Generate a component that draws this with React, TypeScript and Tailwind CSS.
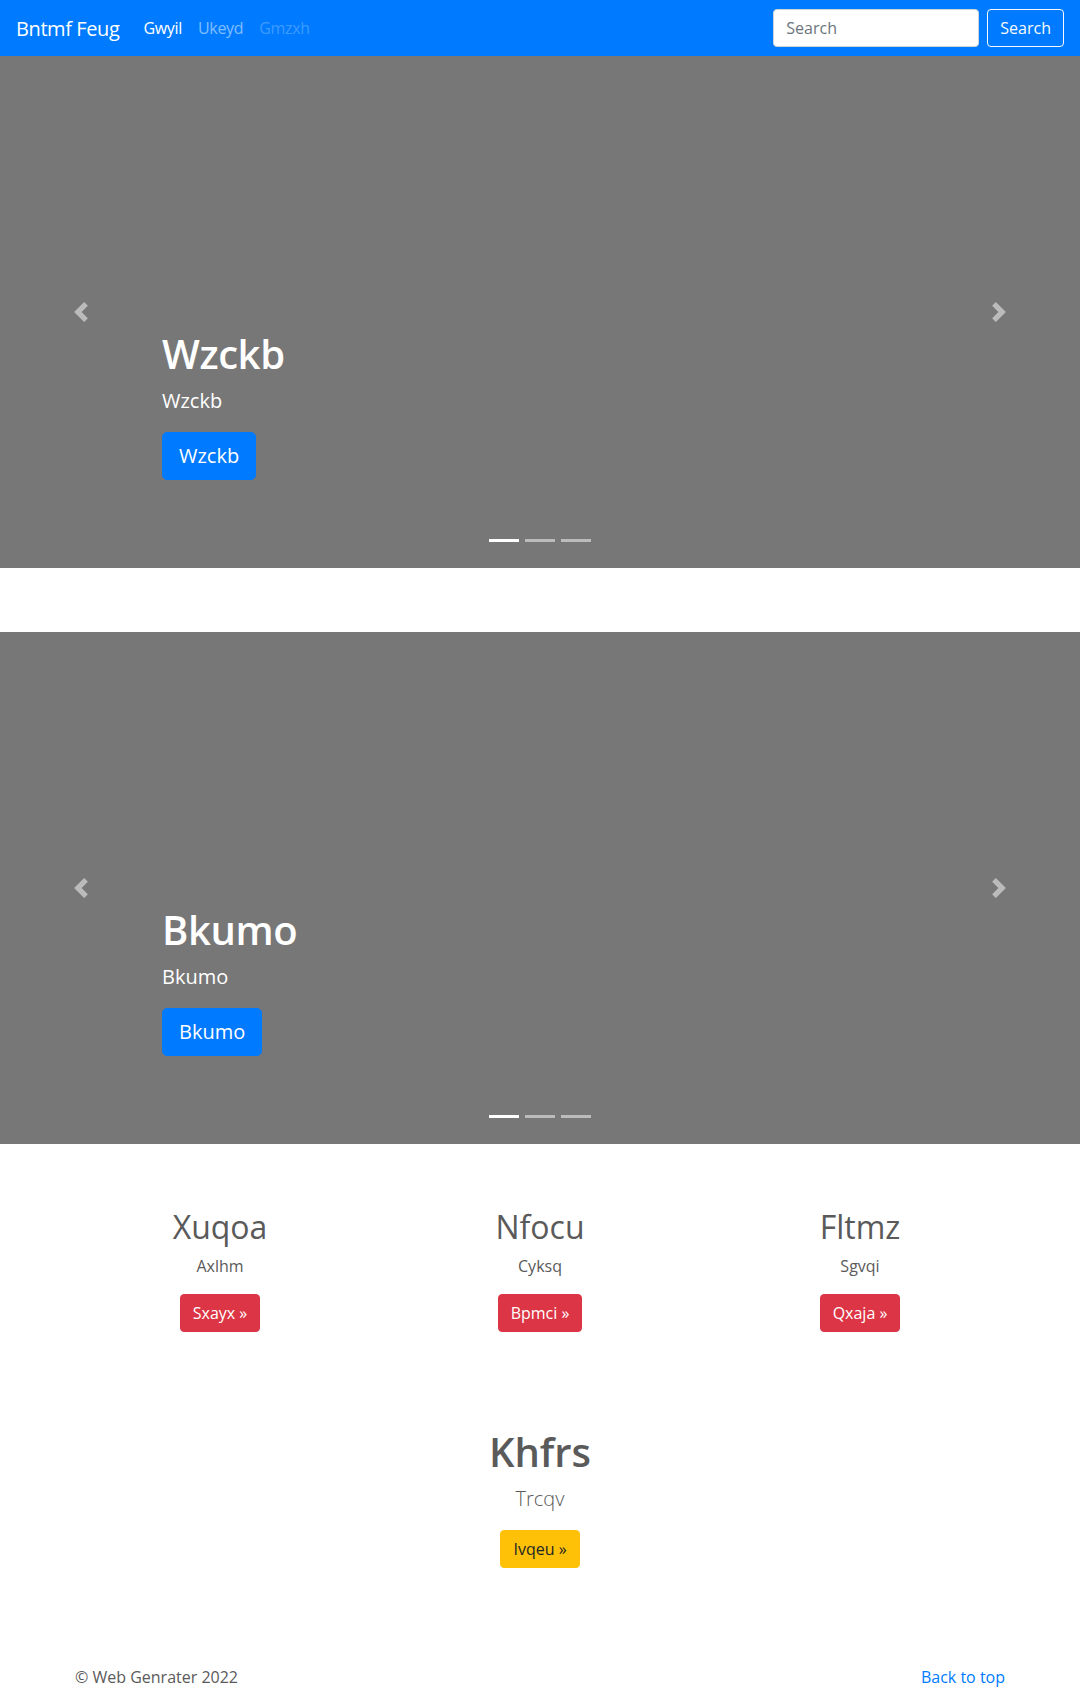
import React from 'react';

// chevrons taken from the bootstrap 4 carousel controls
function Prev() {
  return (
    <svg width="20" height="20" viewBox="0 0 8 8" fill="#fff">
      <path d="M5.25 0l-4 4 4 4 1.5-1.5L4.25 4l2.5-2.5L5.25 0z" />
    </svg>
  );
}

function Next() {
  return (
    <svg width="20" height="20" viewBox="0 0 8 8" fill="#fff">
      <path d="M2.75 0l-1.5 1.5L3.75 4l-2.5 2.5L2.75 8l4-4-4-4z" />
    </svg>
  );
}

function Slide({ title }: { title: string }) {
  return (
    <div className="relative flex h-[512px] flex-col justify-end bg-[#777] pb-[88px] pl-[15%] text-white">
      {/* Pfeile */}
      <div className="absolute left-0 top-0 bottom-0 flex w-[15%] items-center justify-center opacity-50">
        <Prev />
      </div>
      <div className="absolute right-0 top-0 bottom-0 flex w-[15%] items-center justify-center opacity-50">
        <Next />
      </div>

      <h1 className="mb-2 text-[40px] font-semibold leading-[48px] tracking-[-0.01em]">{title}</h1>
      <p className="mb-4 text-[20px] leading-[30px]">{title}</p>
      <div>
        <a href="#" className="inline-block rounded-[5px] border border-[#007bff] bg-[#007bff] px-4 py-2 text-[20px] leading-[30px] text-white">
          {title}
        </a>
      </div>

      {/* Indikatoren */}
      <div className="absolute bottom-[26px] left-1/2 flex -translate-x-1/2 gap-[6px]">
        <span className="h-[3px] w-[30px] bg-white" />
        <span className="h-[3px] w-[30px] bg-white/50" />
        <span className="h-[3px] w-[30px] bg-white/50" />
      </div>
    </div>
  );
}

const cols = [
  { h: 'Xuqoa', p: 'Axlhm', b: 'Sxayx' },
  { h: 'Nfocu', p: 'Cyksq', b: 'Bpmci' },
  { h: 'Fltmz', p: 'Sgvqi', b: 'Qxaja' },
];

export default function App() {
  return (
    <main className="min-h-screen bg-white font-['Open_Sans',sans-serif] text-[16px] text-[#5a5a5a]">
      {/* NAVBAR */}
      <header className="flex h-[56px] items-center justify-between bg-[#007bff] px-4">
        <div className="flex items-center">
          <a href="#" className="mr-4 pt-px text-[20px] leading-[30px] tracking-[-0.02em] text-white">Bntmf Feug</a>
          <nav className="flex items-center tracking-[-0.02em]">
            <a href="#" className="px-2 text-white">Gwyil</a>
            <a href="#" className="px-2 text-white/50">Ukeyd</a>
            <span className="px-2 text-white/25">Gmzxh</span>
          </nav>
        </div>
        <div className="flex items-center gap-2">
          <input
            placeholder="Search"
            className="h-[38px] w-[206px] rounded-[4px] border border-[#ced4da] bg-white px-3 text-[16px] text-[#495057] placeholder:text-[#6c757d] focus:outline-none"
          />
          <button className="h-[38px] rounded-[4px] border border-[#f8f9fa] px-3 text-[#f8f9fa]">Search</button>
        </div>
      </header>

      <Slide title="Wzckb" />
      <div className="mt-16">
        <Slide title="Bkumo" />
      </div>

      {/* Spalten */}
      <section className="mx-auto mt-16 grid w-[960px] grid-cols-3">
        {cols.map(c => (
          <div key={c.h} className="mb-6 px-[15px] text-center">
            <h2 className="mb-2 text-[32px] leading-[38.4px]">{c.h}</h2>
            <p className="mb-4 leading-6">{c.p}</p>
            <p className="mb-4">
              <a href="#" className="inline-block rounded-[4px] border border-[#dc3545] bg-[#dc3545] px-3 py-[6px] leading-6 text-white">
                {c.b} »
              </a>
            </p>
          </div>
        ))}
      </section>

      <section className="mt-[56px] text-center">
        <h1 className="mb-2 text-[40px] font-semibold leading-[48px]">Khfrs</h1>
        <p className="mb-4 text-[20px] font-light leading-[30px]">Trcqv</p>
        <p className="mb-4">
          <a href="#" className="inline-block rounded-[4px] border border-[#ffc107] bg-[#ffc107] px-3 py-[6px] leading-6 text-[#212529]">
            Ivqeu »
          </a>
        </p>
      </section>

      <footer className="mx-auto flex w-[960px] justify-between px-[15px] pt-[81px] pb-12">
        <p>© Web Genrater 2022</p>
        <a href="#" className="text-[#007bff]">Back to top</a>
      </footer>
    </main>
  );
}
